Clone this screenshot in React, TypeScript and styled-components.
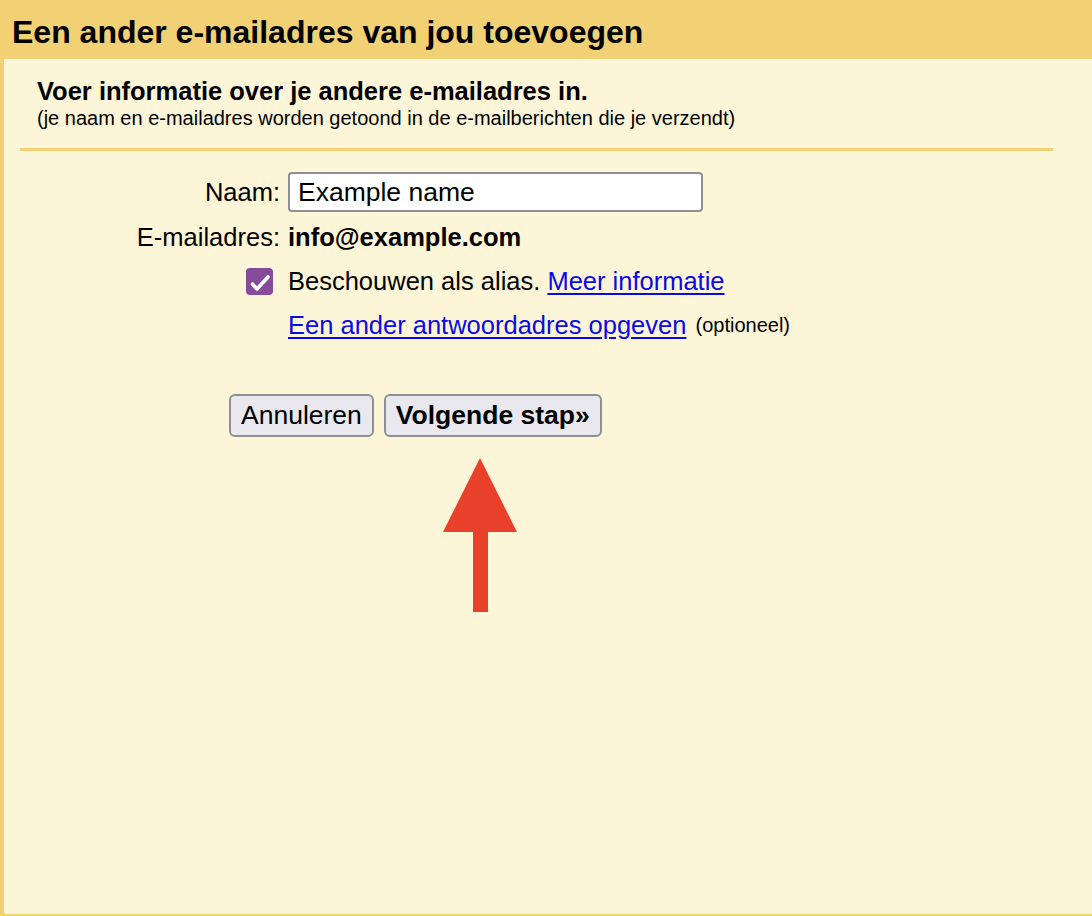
import React from 'react';
import styled, { createGlobalStyle } from 'styled-components';

const GlobalStyle = createGlobalStyle`
  html, body {
    margin: 0;
    padding: 0;
    background: #f2d175;
    font-family: "Liberation Sans", Arial, sans-serif;
    color: #000;
  }
`;

const Page = styled.div`
  display: flex;
  flex-direction: column;
  height: 916px;
  overflow: hidden;
`;

const Header = styled.h1`
  margin: 0;
  height: 59px;
  box-sizing: border-box;
  padding: 14px 12px 0;
  background: #f2d175;
  font-size: 32px;
  line-height: 37px;
  font-weight: bold;
`;

const Panel = styled.div`
  flex: 1;
  background: #fdf5d8;
  border-left: 4px solid #f2d175;
  border-bottom: 2px solid #f2d175;
  border-bottom-left-radius: 6px;
  padding: 17px 39px 0 16px;
`;

const Intro = styled.div`
  padding: 0 0 18px 17px;
  border-bottom: 3px solid #f2d175;
`;

const Subtitle = styled.div`
  font-size: 25.5px;
  font-weight: bold;
  line-height: 30px;
`;

const Hint = styled.div`
  font-size: 20px;
  line-height: 24px;
`;

// label column ends where the values start (x = 280 / 288)
const Form = styled.div`
  display: grid;
  grid-template-columns: 260px auto;
  column-gap: 8px;
  row-gap: 6px;
  align-items: center;
  padding-top: 21px;
  font-size: 25.5px;
  line-height: 38px;
`;

const Label = styled.div`
  text-align: right;
`;

const Value = styled.div<{ $bold?: boolean }>`
  font-weight: ${(p) => (p.$bold ? 'bold' : 'normal')};
  display: flex;
  align-items: center;
  white-space: nowrap;
`;

const Input = styled.input`
  width: 415px;
  height: 40px;
  box-sizing: border-box;
  border: 2px solid #8e8e96;
  border-radius: 4px;
  background: #fff;
  padding: 0 8px;
  font-family: inherit;
  font-size: 26.5px;
  color: #000;
  outline: none;
`;

const CheckCell = styled.div`
  display: flex;
  justify-content: flex-end;
  align-items: center;
  padding-right: 7px;
`;

const Box = styled.span`
  width: 27px;
  height: 27px;
  border-radius: 4px;
  background: #874b9b;
  display: inline-flex;
`;

const Link = styled.a`
  color: #0a0ae6;
  text-decoration: underline;
  text-underline-offset: 3px;
  cursor: pointer;
`;

const Small = styled.span`
  font-size: 20px;
  margin-left: 2px;
`;

const Buttons = styled.div`
  display: flex;
  gap: 10px;
  padding: 50px 0 0 209px;
`;

const Button = styled.button<{ $primary?: boolean }>`
  height: 43px;
  padding: 0 10px;
  border: 2px solid #8e8e96;
  border-radius: 6px;
  background: #e8e8ee;
  font-family: inherit;
  font-size: 26.5px;
  font-weight: ${(p) => (p.$primary ? 'bold' : 'normal')};
  color: #000;
`;

const ArrowWrap = styled.div`
  padding: 21px 0 0 423px;
  line-height: 0;
`;

const App: React.FC = () => {
  return (
    <Page>
      <GlobalStyle />
      <Header>Een ander e-mailadres van jou toevoegen</Header>
      <Panel>
        <Intro>
          <Subtitle>Voer informatie over je andere e-mailadres in.</Subtitle>
          <Hint>(je naam en e-mailadres worden getoond in de e-mailberichten die je verzendt)</Hint>
        </Intro>
        <Form>
          <Label>Naam:</Label>
          <Value>
            <Input defaultValue="Example name" />
          </Value>
          <Label>E-mailadres:</Label>
          <Value $bold>info@example.com</Value>
          <CheckCell>
            <Box>
              <svg width="27" height="27" viewBox="0 0 27 27">
                <path d="M6.5 16l4.5 5 11-12" fill="none" stroke="#fff" strokeWidth="3.6" strokeLinecap="round" strokeLinejoin="round" />
              </svg>
            </Box>
          </CheckCell>
          <Value>
            Beschouwen als alias.&nbsp;<Link>Meer informatie</Link>
          </Value>
          <div />
          <Value>
            <Link>Een ander antwoordadres opgeven</Link>&nbsp;<Small>(optioneel)</Small>
          </Value>
        </Form>
        <Buttons>
          <Button>Annuleren</Button>
          <Button $primary>Volgende stap»</Button>
        </Buttons>
        <ArrowWrap>
          <svg width="74" height="154" viewBox="0 0 74 154">
            <polygon points="37,0 74,74 0,74" fill="#e8402a" />
            <rect x="30" y="73" width="15" height="81" fill="#e8402a" />
          </svg>
        </ArrowWrap>
      </Panel>
    </Page>
  );
};

export default App;
